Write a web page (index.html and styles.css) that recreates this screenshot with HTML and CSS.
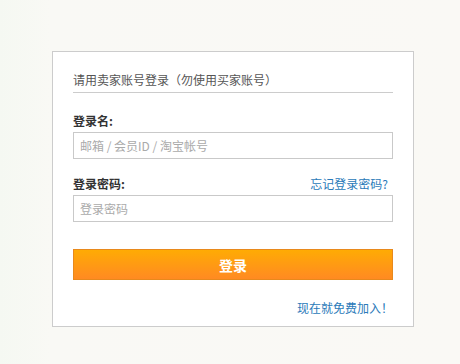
FILE: index.html
```html
<!DOCTYPE html>
<html lang="zh-CN">
<head>
<meta charset="utf-8">
<link rel="stylesheet" href="styles.css">
</head>
<body>
<div class="page">
  <form class="login-box">
    <div class="title">请用卖家账号登录（勿使用买家账号）</div>
    <div class="label-row first"><span class="label">登录名:</span></div>
    <input class="field" type="text" placeholder="邮箱 / 会员ID / 淘宝帐号">
    <div class="label-row second"><span class="label">登录密码:</span><a class="link" href="#">忘记登录密码?</a></div>
    <input class="field" type="password" placeholder="登录密码">
    <button class="submit" type="button">登录</button>
    <div class="join-row"><a class="link join" href="#">现在就免费加入！</a></div>
  </form>
</div>
</body>
</html>
```
FILE: styles.css
```css
html, body {
  margin: 0;
  padding: 0;
}
body {
  width: 460px;
  height: 364px;
  overflow: hidden;
  background: linear-gradient(to right, #f5f8f2 0px, #f9f9f5 50px, #faf9f5 100%);
  font-family: "Noto Sans CJK SC", "Noto Sans", sans-serif;
  font-size: 12px;
}
.page {
  padding: 51px 0 0 52px;
}
.login-box {
  width: 320px;
  border: 1px solid #cccccc;
  background: #ffffff;
  padding: 19px 20px 10px 20px;
  display: flex;
  flex-direction: column;
}
.title {
  color: #555555;
  line-height: 18px;
  padding-bottom: 3px;
  border-bottom: 1px solid #cccccc;
}
.label-row {
  display: flex;
  justify-content: space-between;
  align-items: center;
  line-height: 16px;
  margin-top: 16px;
  margin-bottom: 3px;
}
.label-row.first {
  margin-top: 20px;
}
.label-row.second {
  margin-top: 17px;
  margin-bottom: 3px;
}
.label {
  color: #333333;
  font-weight: bold;
}
.link {
  color: #2a7ab9;
  text-decoration: none;
  margin-right: 5px;
}
.link.join {
  margin-right: 0;
}
.field {
  box-sizing: border-box;
  width: 320px;
  height: 27px;
  border: 1px solid #c9c9c9;
  padding: 0 6px;
  margin: 0;
  font-family: inherit;
  font-size: 12px;
  color: #333;
  outline: none;
}
.field::placeholder {
  color: #aaaaaa;
}
.submit {
  margin-top: 27px;
  box-sizing: border-box;
  width: 320px;
  height: 31px;
  border: 1px solid #e8891c;
  background: linear-gradient(to bottom, #ffab04, #ff8a22);
  color: #ffffff;
  font-family: inherit;
  font-size: 14px;
  font-weight: bold;
  padding: 0;
  cursor: pointer;
}
.join-row {
  display: flex;
  justify-content: flex-end;
  line-height: 16px;
  margin-top: 20px;
}
```
